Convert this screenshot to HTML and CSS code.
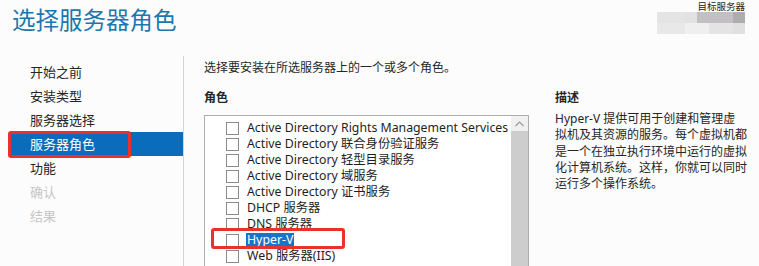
FILE: index.html
```html
<!DOCTYPE html>
<html lang="zh-CN">
<head>
<meta charset="utf-8">
<title>选择服务器角色</title>
<link rel="stylesheet" href="styles.css">
</head>
<body>
<header class="header">
  <h1 class="title">选择服务器角色</h1>
  <div class="target">
    <div class="target-label">目标服务器</div>
    <div class="target-blur">
      <div class="blur-row"><span class="b1"></span><span class="b2"></span><span class="b3"></span><span class="b4"></span></div>
      <div class="blur-row"><span class="c1"></span><span class="c2"></span><span class="c3"></span><span class="c4"></span></div>
    </div>
  </div>
</header>
<div class="wizard">
  <nav class="nav">
    <div class="nav-item">开始之前</div>
    <div class="nav-item">安装类型</div>
    <div class="nav-item">服务器选择</div>
    <div class="nav-item active">服务器角色</div>
    <div class="nav-item">功能</div>
    <div class="nav-item disabled">确认</div>
    <div class="nav-item disabled">结果</div>
  </nav>
  <main class="main">
    <p class="intro">选择要安装在所选服务器上的一个或多个角色。</p>
    <div class="columns">
      <section class="roles">
        <h2 class="heading">角色</h2>
        <div class="listbox">
          <div class="list">
            <div class="row"><span class="box"></span><span class="label">Active Directory Rights Management Services</span></div>
            <div class="row"><span class="box"></span><span class="label">Active Directory 联合身份验证服务</span></div>
            <div class="row"><span class="box"></span><span class="label">Active Directory 轻型目录服务</span></div>
            <div class="row"><span class="box"></span><span class="label">Active Directory 域服务</span></div>
            <div class="row"><span class="box"></span><span class="label">Active Directory 证书服务</span></div>
            <div class="row"><span class="box"></span><span class="label">DHCP 服务器</span></div>
            <div class="row"><span class="box"></span><span class="label">DNS 服务器</span></div>
            <div class="row marked"><span class="box"></span><span class="label selected">Hyper-V</span></div>
            <div class="row"><span class="box"></span><span class="label">Web 服务器(IIS)</span></div>
            <div class="row"><span class="box"></span></div>
          </div>
          <div class="scrollbar">
            <div class="scroll-up">
              <svg width="9" height="6" viewBox="0 0 9 6"><path d="M0.5 5 L4.5 1 L8.5 5" fill="none" stroke="#9a9a9a" stroke-width="1.2"/></svg>
            </div>
            <div class="scroll-thumb"></div>
          </div>
        </div>
      </section>
      <section class="desc">
        <h2 class="heading">描述</h2>
        <p class="desc-text">Hyper-V 提供可用于创建和管理虚<br>拟机及其资源的服务。每个虚拟机都<br>是一个在独立执行环境中运行的虚拟<br>化计算机系统。这样，你就可以同时<br>运行多个操作系统。</p>
      </section>
    </div>
  </main>
</div>
</body>
</html>
```
FILE: styles.css
```css
html, body {
  margin: 0;
  padding: 0;
  height: 100%;
  overflow: hidden;
}
body {
  background: #fcfcfc;
  font-family: "Noto Sans", "Noto Sans CJK SC", sans-serif;
  color: #1e1e1e;
}
.header {
  display: flex;
  justify-content: space-between;
  align-items: flex-start;
  height: 56px;
}
.title {
  margin: 0;
  padding: 5px 0 0 12px;
  font-family: "Noto Sans CJK SC", sans-serif;
  font-weight: 400;
  font-size: 23.5px;
  line-height: 28px;
  color: #1a78ad;
}
.target {
  display: flex;
  flex-direction: column;
  align-items: flex-end;
  padding-right: 14px;
  margin-top: 1px;
}
.target-label {
  font-family: "Noto Sans CJK SC", sans-serif;
  font-size: 9.5px;
  line-height: 11px;
  color: #222;
}
.target-blur {
  display: flex;
  flex-direction: column;
}
.blur-row {
  display: flex;
  justify-content: flex-end;
  height: 11px;
}
.blur-row span { display: block; height: 100%; }
.b1 { width: 28px; background: #e4e4e4; }
.b2 { width: 12px; background: #e2e2e2; }
.b3 { width: 36px; background: #c2c0c2; }
.b4 { width: 12px; background: #aeacae; }
.c1 { width: 28px; background: #e8e8e8; }
.c2 { width: 24px; background: #efefef; }
.c3 { width: 24px; background: #e4e4e4; }
.c4 { width: 12px; background: #e0e0e0; }

.wizard {
  display: grid;
  grid-template-columns: 174px 1fr;
  margin-left: 10px;
}
.nav {
  padding-top: 4px;
  border-right: 1px solid #d4d4d4;
  height: 300px;
}
.nav-item {
  position: relative;
  height: 24px;
  line-height: 24px;
  padding-left: 20px;
  font-family: "Noto Sans CJK SC", sans-serif;
  font-size: 13px;
  color: #262626;
}
.nav-item.active {
  background: #0a6cba;
  color: #fff;
}
.nav-item.active::after {
  content: "";
  position: absolute;
  left: -2px;
  top: -1px;
  width: 117px;
  height: 21px;
  border: 3px solid #e8322b;
  border-radius: 3px;
}
.nav-item.disabled {
  color: #c6c6c6;
}
.main {
  padding: 3px 0 0 20px;
}
.intro {
  margin: 0;
  font-size: 12px;
  line-height: 16px;
  font-family: "Noto Sans CJK SC", sans-serif;
  color: #262626;
}
.columns {
  display: flex;
  gap: 26px;
  margin-top: 14px;
}
.heading {
  margin: 0;
  font-family: "Noto Sans CJK SC", sans-serif;
  font-size: 12px;
  line-height: 16px;
  font-weight: 700;
  color: #262626;
}
.roles {
  width: 325px;
}
.listbox {
  display: flex;
  margin-top: 10px;
  border: 1px solid #adadad;
  border-bottom: none;
  height: 160px;
  background: #fff;
}
.list {
  flex: 1;
  padding-top: 4px;
}
.row {
  position: relative;
  display: flex;
  align-items: center;
  height: 16px;
  padding-left: 21px;
}
.box {
  width: 11px;
  height: 11px;
  border: 1px solid #8a8a8a;
  background: #fff;
  flex: none;
}
.label {
  margin-left: 8px;
  font-size: 12.3px;
  line-height: 14px;
  white-space: nowrap;
  color: #1e1e1e;
}
.label.selected {
  background: #1874c9;
  color: #fff;
  padding: 0 1px;
  margin-left: 7px;
}
.row.marked::after {
  content: "";
  position: absolute;
  left: 6px;
  top: -4px;
  width: 128px;
  height: 15px;
  border: 3px solid #e8322b;
  border-radius: 3px;
}
.scrollbar {
  width: 17px;
  display: flex;
  flex-direction: column;
}
.scroll-up {
  height: 15px;
  background: #f0f0f0;
  display: flex;
  align-items: center;
  justify-content: center;
}
.scroll-thumb {
  flex: 1;
  background: #cdcdcd;
}
.desc {
  width: 190px;
}
.desc-text {
  margin: 6px 0 0;
  font-size: 12px;
  line-height: 16.3px;
  white-space: nowrap;
  color: #262626;
}
```
